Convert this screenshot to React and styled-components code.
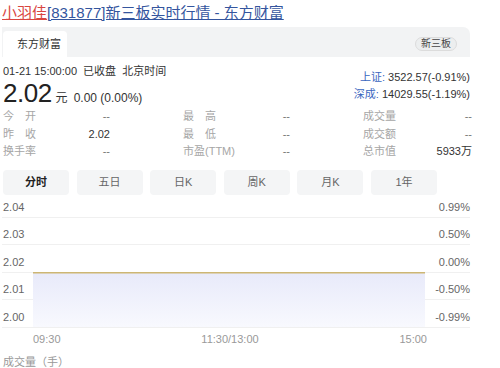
import styled, { createGlobalStyle } from "styled-components";

const GlobalStyle = createGlobalStyle`
  body {
    margin: 0;
    background: #fff;
    font-family: "Liberation Sans", "Noto Sans CJK SC", sans-serif;
    color: #333;
  }
`;

const stats = [
  [
    ["今开", "--"],
    ["最高", "--"],
    ["成交量", "--"],
  ],
  [
    ["昨收", "2.02", true],
    ["最低", "--"],
    ["成交额", "--"],
  ],
  [
    ["换手率", "--"],
    ["市盈(TTM)", "--"],
    ["总市值", "5933万", true],
  ],
];

const tabs = ["分时", "五日", "日K", "周K", "月K", "1年"];

const rows = [
  ["2.04", "0.99%"],
  ["2.03", "0.50%"],
  ["2.02", "0.00%"],
  ["2.01", "-0.50%"],
  ["2.00", "-0.99%"],
];

const App = () => {
  return (
    <Page>
      <GlobalStyle />
      <Title>
        <Stock href="#">小羽佳</Stock>
        <TitleLink href="#">[831877]新三板实时行情 - 东方财富</TitleLink>
      </Title>

      <HeaderBar>
        <SiteTab>东方财富</SiteTab>
        <Pill>新三板</Pill>
      </HeaderBar>

      <Quote>
        <div>
          <TimeLine>01-21 15:00:00&nbsp;&nbsp;已收盘&nbsp;&nbsp;北京时间</TimeLine>
          <PriceLine>
            <Price>2.02</Price>
            <Unit>元</Unit>
            <Change>0.00 (0.00%)</Change>
          </PriceLine>
        </div>
        <Indices>
          <Index>
            <IndexName>上证:</IndexName> 3522.57(-0.91%)
          </Index>
          <Index>
            <IndexName>深成:</IndexName> 14029.55(-1.19%)
          </Index>
        </Indices>
      </Quote>

      <Stats>
        {stats.flat().map(([label, value, strong]) => (
          <Stat key={label}>
            <StatLabel $justify={label.length === 2}>{label}</StatLabel>
            <StatValue $strong={strong}>{value}</StatValue>
          </Stat>
        ))}
      </Stats>

      <Tabs>
        {tabs.map((t, i) => (
          <Tab key={t} $active={i === 0}>
            {t}
          </Tab>
        ))}
      </Tabs>

      <Chart>
        {rows.map(([price, pct], i) => (
          <GridRow key={price} $first={i === 0}>
            <AxisLabel>{price}</AxisLabel>
            <AxisLabel>{pct}</AxisLabel>
          </GridRow>
        ))}
        <Plot width="392" height="55" viewBox="0 0 392 55">
          <defs>
            <linearGradient id="area" x1="0" y1="0" x2="0" y2="1">
              <stop offset="0" stopColor="#e8eafa" />
              <stop offset="1" stopColor="#f8f9fe" />
            </linearGradient>
          </defs>
          <rect x="0" y="1" width="392" height="54" fill="url(#area)" />
          <line x1="0" y1="0.75" x2="392" y2="0.75" stroke="#cdb673" strokeWidth="1.5" />
        </Plot>
      </Chart>

      <TimeAxis>
        <span>09:30</span>
        <span>11:30/13:00</span>
        <span>15:00</span>
      </TimeAxis>

      <VolumeTitle>成交量（手）</VolumeTitle>
    </Page>
  );
};

export default App;

const Page = styled.div`
  width: 468px;
  padding: 3px 30px 0 2px;
`;

const Title = styled.div`
  display: flex;
  height: 20px;
  font-size: 15px;
  line-height: 20px;
  white-space: nowrap;
`;

const Stock = styled.a`
  color: #d9463f;
  text-decoration: underline;
`;

const TitleLink = styled.a`
  color: #34559e;
  text-decoration: underline;
`;

const HeaderBar = styled.div`
  margin-top: 4px;
  height: 30px;
  box-sizing: border-box;
  padding: 4px 13px 0 1px;
  background: #f2f3f4;
  border-radius: 0 7px 0 0;
  display: flex;
  justify-content: space-between;
  align-items: flex-start;
`;

const SiteTab = styled.div`
  width: 64px;
  height: 26px;
  background: #fff;
  border-radius: 4px 4px 0 0;
  font-size: 11px;
  line-height: 26px;
  box-sizing: border-box;
  padding-left: 14px;
  color: #333;
`;

const Pill = styled.div`
  margin-top: 6px;
  width: 42px;
  height: 14px;
  box-sizing: border-box;
  border: 1px solid #dcdcdc;
  border-radius: 7px;
  background: #eceeef;
  font-size: 10px;
  line-height: 12px;
  text-align: center;
  color: #444;
`;

const Quote = styled.div`
  margin-top: 7px;
  display: flex;
  justify-content: space-between;
  padding-left: 1px;
`;

const TimeLine = styled.div`
  height: 14px;
  font-size: 11px;
  line-height: 14px;
  color: #333;
`;

const PriceLine = styled.div`
  margin-top: 1px;
  height: 28px;
  display: flex;
  align-items: baseline;
  line-height: 28px;
`;

const Price = styled.span`
  font-size: 26px;
  letter-spacing: -0.5px;
  color: #222;
`;

const Unit = styled.span`
  font-size: 12px;
  line-height: 14px;
  margin-left: 4px;
`;

const Change = styled.span`
  font-size: 12px;
  line-height: 14px;
  margin-left: 6px;
`;

const Indices = styled.div`
  padding-top: 5px;
  text-align: right;
`;

const Index = styled.div`
  height: 17px;
  font-size: 11px;
  line-height: 17px;
  color: #333;
`;

const IndexName = styled.span`
  color: #3a66c0;
`;

const Stats = styled.div`
  margin-top: 1px;
  padding-left: 1px;
  display: grid;
  grid-template-columns: 107px 107px 109px;
  grid-auto-rows: 17.5px;
  column-gap: 73px;
`;

const Stat = styled.div`
  display: flex;
  justify-content: space-between;
  font-size: 11px;
  line-height: 17.5px;
`;

const StatLabel = styled.span`
  color: #a6a6a6;
  width: ${(p) => (p.$justify ? "33px" : "auto")};
  text-align-last: ${(p) => (p.$justify ? "justify" : "auto")};
`;

const StatValue = styled.span`
  color: ${(p) => (p.$strong ? "#333" : "#777")};
`;

const Tabs = styled.div`
  margin-top: 9px;
  padding-left: 1px;
  display: grid;
  grid-template-columns: repeat(6, 66px);
  column-gap: 7.6px;
`;

const Tab = styled.div`
  height: 25px;
  line-height: 25px;
  text-align: center;
  background: #f4f5f6;
  border-radius: 4px;
  font-size: 11px;
  font-weight: ${(p) => (p.$active ? "bold" : "normal")};
  color: ${(p) => (p.$active ? "#222" : "#666")};
`;

const Chart = styled.div`
  position: relative;
  margin-top: 5px;
`;

const GridRow = styled.div`
  box-sizing: border-box;
  height: ${(p) => (p.$first ? "18px" : "27.5px")};
  border-bottom: 1px solid #f0f0f0;
  display: flex;
  justify-content: space-between;
  align-items: flex-end;
  padding: 0 0 3px 1px;
`;

const AxisLabel = styled.span`
  font-size: 11px;
  line-height: 13px;
  color: #666;
`;

const Plot = styled.svg`
  position: absolute;
  left: 31px;
  top: 72px;
  display: block;
`;

const TimeAxis = styled.div`
  margin: 4px 0 0 31px;
  width: 394px;
  display: flex;
  justify-content: space-between;
  font-size: 11px;
  line-height: 14px;
  color: #999;
`;

const VolumeTitle = styled.div`
  margin-top: 9px;
  padding-left: 1px;
  font-size: 11px;
  line-height: 14px;
  color: #999;
`;
